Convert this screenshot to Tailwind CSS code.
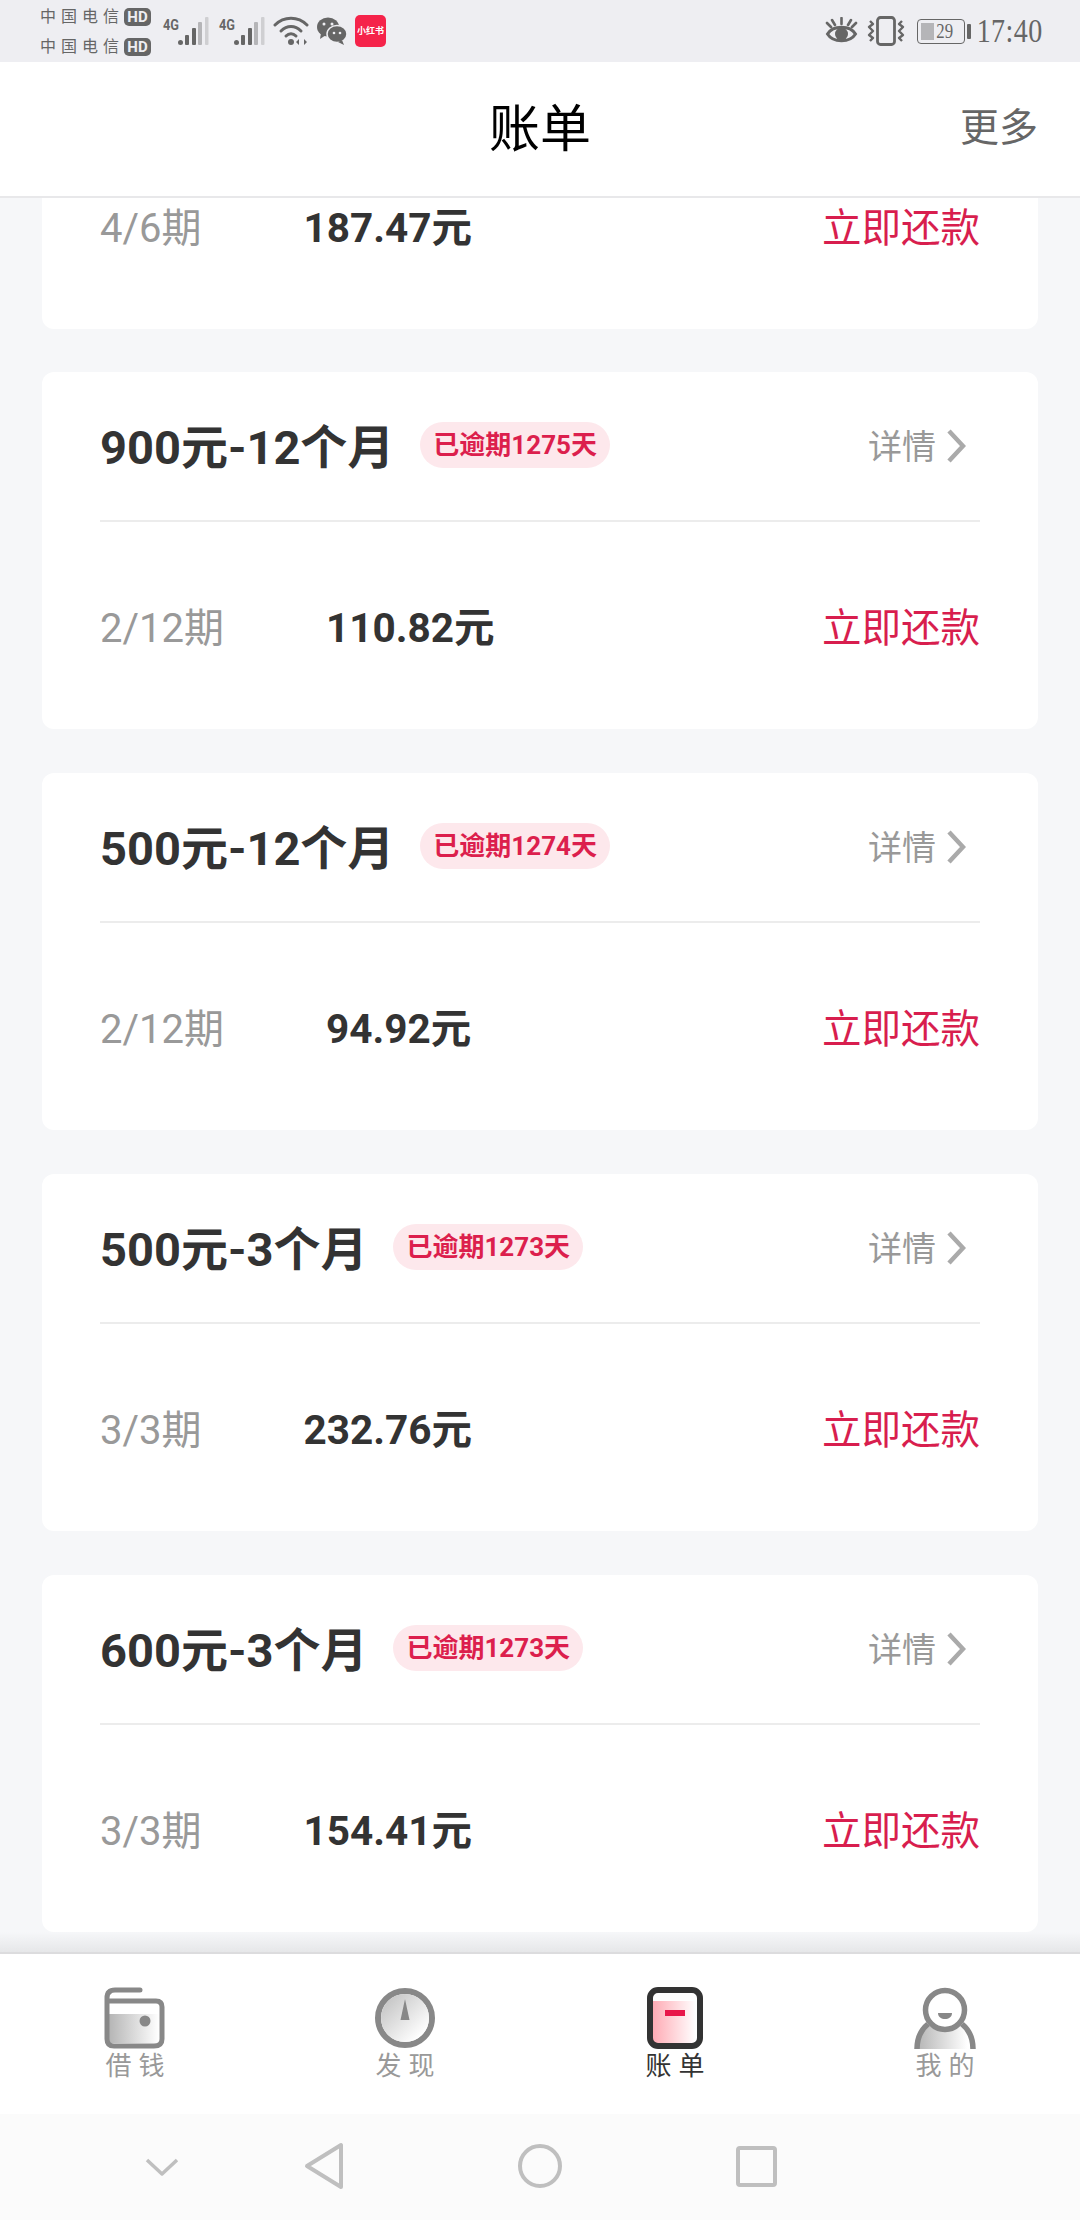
<!DOCTYPE html>
<html lang="zh-CN">
<head>
  <meta charset="UTF-8">
  <meta name="viewport" content="width=device-width, initial-scale=1.0">
  <title>账单</title>
  <script src="https://cdn.jsdelivr.net/npm/@tailwindcss/browser@4"></script>
</head>
<body class="font-['Roboto','Noto_Sans_CJK_SC',sans-serif]">
  <div class="w-[1080px] h-[2220px] flex flex-col overflow-hidden bg-[#f6f7f9]">

    <!-- Status bar -->
    <div class="h-[62px] shrink-0 bg-[#eeeef2] flex items-center justify-between pl-[40px] pr-[37px] text-[#666]">
      <div class="flex items-center">
        <div class="flex flex-col gap-[8px] pt-[1px] w-[113px] text-[16px] leading-[22px] tracking-[5px]">
          <div class="flex items-center">中国电信<span class="w-[27px] h-[18px] rounded-[5px] bg-[#666] text-[#eeeef2] text-[15px] leading-[18px] font-bold tracking-normal text-center">HD</span></div>
          <div class="flex items-center">中国电信<span class="w-[27px] h-[18px] rounded-[5px] bg-[#666] text-[#eeeef2] text-[15px] leading-[18px] font-bold tracking-normal text-center">HD</span></div>
        </div>
        <svg width="48" height="34" viewBox="0 0 48 34" class="ml-[9px] mt-[2px]">
          <text x="1" y="15" font-size="15" font-weight="700" fill="#666" textLength="16" lengthAdjust="spacingAndGlyphs">4G</text>
          <circle cx="18.5" cy="27.5" r="2.5" fill="#666"/>
          <rect x="23" y="20" width="4" height="10" rx="1" fill="#666"/>
          <rect x="30" y="13" width="4" height="17" rx="1" fill="#666"/>
          <rect x="36" y="7" width="4" height="23" rx="1" fill="#b5b5b8"/>
          <rect x="43" y="2" width="3.5" height="28" rx="1" fill="#cfcfd2"/>
        </svg>
        <svg width="48" height="34" viewBox="0 0 48 34" class="ml-[8px] mt-[2px]">
          <text x="1" y="15" font-size="15" font-weight="700" fill="#666" textLength="16" lengthAdjust="spacingAndGlyphs">4G</text>
          <circle cx="18.5" cy="27.5" r="2.5" fill="#666"/>
          <rect x="23" y="20" width="4" height="10" rx="1" fill="#666"/>
          <rect x="30" y="13" width="4" height="17" rx="1" fill="#666"/>
          <rect x="36" y="7" width="4" height="23" rx="1" fill="#b5b5b8"/>
          <rect x="43" y="2" width="3.5" height="28" rx="1" fill="#cfcfd2"/>
        </svg>
        <svg width="36" height="30" viewBox="0 0 36 30" class="ml-[7px]" fill="none" stroke="#666" stroke-width="3" stroke-linecap="round">
          <path d="M2 9C11 0 25 0 34 9"/>
          <path d="M8 15C14 9 22 9 28 15"/>
          <path d="M13 20C16 17 20 17 23 20"/>
          <circle cx="18" cy="26" r="3" fill="#666" stroke="none"/>
          <path d="M26 23L26 29L23 26Z M31 23L31 29L34 26Z" fill="#666" stroke="none"/>
        </svg>
        <svg width="30" height="28" viewBox="0 0 30 28" class="ml-[8px]">
          <ellipse cx="11" cy="10" rx="11" ry="9.5" fill="#666"/>
          <path d="M4 16L3 22L9 18Z" fill="#666"/>
          <ellipse cx="20" cy="17" rx="10" ry="8.5" fill="#666" stroke="#eeeef2" stroke-width="1.5"/>
          <path d="M25 23L27 28L21 25Z" fill="#666"/>
          <circle cx="7" cy="7" r="1.5" fill="#eeeef2"/>
          <circle cx="15" cy="7" r="1.5" fill="#eeeef2"/>
          <circle cx="17" cy="16" r="1.3" fill="#eeeef2"/>
          <circle cx="23" cy="16" r="1.3" fill="#eeeef2"/>
        </svg>
        <div class="ml-[8px] w-[31px] h-[32px] rounded-[5px] bg-[#f5234a] text-white text-[9px] font-bold leading-[32px] text-center whitespace-nowrap">小红书</div>
      </div>
      <div class="flex items-center">
        <svg width="33" height="28" viewBox="0 0 33 28" fill="none" stroke="#666" stroke-width="3">
          <path d="M2.5 17C8 8 25 8 30.5 17C25 26 8 26 2.5 17Z"/>
          <circle cx="16.5" cy="17" r="6.5" fill="#666" stroke="none"/>
          <path d="M16.5 1V7M7 3L10 8M26 3L23 8M2 6L6 10M31 6L27 10" stroke-linecap="round" stroke-width="2.6"/>
        </svg>
        <svg width="38" height="30" viewBox="0 0 38 30" class="ml-[9px]" fill="none" stroke="#666" stroke-width="2.8">
          <rect x="10.5" y="1.5" width="17" height="27" rx="3"/>
          <path d="M3 5L6 8L2 11L6 15L2 19L6 22L3 25M35 5L32 8L36 11L32 15L36 19L32 22L35 25" stroke-linejoin="round" stroke-width="2.4"/>
        </svg>
        <div class="ml-[12px] flex items-center">
          <div class="relative w-[48px] h-[25px] rounded-[4px] border border-[#666] flex items-center justify-center">
            <div class="absolute left-[3px] top-[3px] bottom-[3px] w-[13px] bg-[#b5b5b8]"></div>
            <span class="relative pl-[8px] text-[21px] leading-none font-['Liberation_Serif',serif] text-[#666] scale-x-80">29</span>
          </div>
          <div class="ml-[2px] w-[4px] h-[15px] rounded-[1px] bg-[#666]"></div>
        </div>
        <div class="ml-[10px] w-[62px] flex justify-end">
          <span class="shrink-0 text-[33px] leading-none tracking-[0.5px] font-['Liberation_Serif',serif] scale-x-85 origin-right">17:40</span>
        </div>
      </div>
    </div>

    <!-- Header -->
    <div class="relative h-[136px] shrink-0 bg-white border-b-2 border-[#e8e8ea] flex items-center justify-center">
      <span class="text-[51px] leading-none text-black">账单</span>
      <span class="absolute right-[42px] text-[39px] leading-none text-[#666] mb-[2px]">更多</span>
    </div>

    <!-- Bills list -->
    <div class="relative flex-1 min-h-0 overflow-hidden">
      <div class="flex flex-col gap-[44px] px-[42px] mt-[-76px]">

        <div class="bg-white rounded-[12px] px-[58px] h-[207px] mb-[-1px] pt-[6px] flex items-center justify-between">
          <div class="flex items-center gap-[102px]">
            <span class="text-[40px] text-[#999]">4/6期</span>
            <span class="text-[40.5px] font-bold text-[#333]">187.47元</span>
          </div>
          <span class="text-[39.5px] text-[#d81e4e]">立即还款</span>
        </div>

        <div class="bg-white rounded-[12px] px-[58px] h-[357px] flex flex-col">
          <div class="h-[150px] shrink-0 flex items-center border-b-2 border-[#ececec]">
            <span class="pt-[4px] text-[47px] font-bold text-[#333]">900元-12个月</span>
            <span class="ml-[26px] mb-[2px] h-[46px] px-[13px] rounded-full bg-[#fde8ec] text-[26px] leading-[46px] font-bold text-[#dc1f4d]">已逾期1275天</span>
            <span class="ml-auto pt-[2px] text-[34px] text-[#999]">详情</span>
            <svg width="20" height="34" viewBox="0 0 20 34" class="ml-[10px] mr-[14px]" fill="none" stroke="#aaa" stroke-width="4.5"><path d="M3 2L17 17L3 32"/></svg>
          </div>
          <div class="flex-1 pt-[6px] flex items-center justify-between">
            <div class="flex items-center gap-[102px]">
              <span class="text-[40px] text-[#999]">2/12期</span>
              <span class="text-[40.5px] font-bold text-[#333]">110.82元</span>
            </div>
            <span class="text-[39.5px] text-[#d81e4e]">立即还款</span>
          </div>
        </div>

        <div class="bg-white rounded-[12px] px-[58px] h-[357px] flex flex-col">
          <div class="h-[150px] shrink-0 flex items-center border-b-2 border-[#ececec]">
            <span class="pt-[4px] text-[47px] font-bold text-[#333]">500元-12个月</span>
            <span class="ml-[26px] mb-[2px] h-[46px] px-[13px] rounded-full bg-[#fde8ec] text-[26px] leading-[46px] font-bold text-[#dc1f4d]">已逾期1274天</span>
            <span class="ml-auto pt-[2px] text-[34px] text-[#999]">详情</span>
            <svg width="20" height="34" viewBox="0 0 20 34" class="ml-[10px] mr-[14px]" fill="none" stroke="#aaa" stroke-width="4.5"><path d="M3 2L17 17L3 32"/></svg>
          </div>
          <div class="flex-1 pt-[6px] flex items-center justify-between">
            <div class="flex items-center gap-[102px]">
              <span class="text-[40px] text-[#999]">2/12期</span>
              <span class="text-[40.5px] font-bold text-[#333]">94.92元</span>
            </div>
            <span class="text-[39.5px] text-[#d81e4e]">立即还款</span>
          </div>
        </div>

        <div class="bg-white rounded-[12px] px-[58px] h-[357px] flex flex-col">
          <div class="h-[150px] shrink-0 flex items-center border-b-2 border-[#ececec]">
            <span class="pt-[4px] text-[47px] font-bold text-[#333]">500元-3个月</span>
            <span class="ml-[26px] mb-[2px] h-[46px] px-[13px] rounded-full bg-[#fde8ec] text-[26px] leading-[46px] font-bold text-[#dc1f4d]">已逾期1273天</span>
            <span class="ml-auto pt-[2px] text-[34px] text-[#999]">详情</span>
            <svg width="20" height="34" viewBox="0 0 20 34" class="ml-[10px] mr-[14px]" fill="none" stroke="#aaa" stroke-width="4.5"><path d="M3 2L17 17L3 32"/></svg>
          </div>
          <div class="flex-1 pt-[6px] flex items-center justify-between">
            <div class="flex items-center gap-[102px]">
              <span class="text-[40px] text-[#999]">3/3期</span>
              <span class="text-[40.5px] font-bold text-[#333]">232.76元</span>
            </div>
            <span class="text-[39.5px] text-[#d81e4e]">立即还款</span>
          </div>
        </div>

        <div class="bg-white rounded-[12px] px-[58px] h-[357px] flex flex-col">
          <div class="h-[150px] shrink-0 flex items-center border-b-2 border-[#ececec]">
            <span class="pt-[4px] text-[47px] font-bold text-[#333]">600元-3个月</span>
            <span class="ml-[26px] mb-[2px] h-[46px] px-[13px] rounded-full bg-[#fde8ec] text-[26px] leading-[46px] font-bold text-[#dc1f4d]">已逾期1273天</span>
            <span class="ml-auto pt-[2px] text-[34px] text-[#999]">详情</span>
            <svg width="20" height="34" viewBox="0 0 20 34" class="ml-[10px] mr-[14px]" fill="none" stroke="#aaa" stroke-width="4.5"><path d="M3 2L17 17L3 32"/></svg>
          </div>
          <div class="flex-1 pt-[6px] flex items-center justify-between">
            <div class="flex items-center gap-[102px]">
              <span class="text-[40px] text-[#999]">3/3期</span>
              <span class="text-[40.5px] font-bold text-[#333]">154.41元</span>
            </div>
            <span class="text-[39.5px] text-[#d81e4e]">立即还款</span>
          </div>
        </div>

      </div>
      <!-- soft shadow cast by the tab bar -->
      <div class="absolute left-0 right-0 bottom-0 h-[20px] bg-gradient-to-b from-[#e6e7e9]/0 to-[#e6e7e9]"></div>
    </div>

    <!-- Tab bar -->
    <div class="h-[162px] shrink-0 bg-white border-t-2 border-[#dcdcde] grid grid-cols-4">
      <div class="flex flex-col items-center pt-[33px]">
        <svg width="62" height="62" viewBox="0 0 62 62">
          <defs><linearGradient id="g1" x1="0" x2="1" y1="0" y2="0"><stop offset="0" stop-color="#b5b5b5"/><stop offset="1" stop-color="#fff"/></linearGradient></defs>
          <rect x="5" y="27" width="50" height="29" fill="url(#g1)"/>
          <path d="M36 3H11Q3 3 3 11V52Q3 59 10 59H50Q58 59 58 52V20Q58 14 52 14H5" fill="none" stroke="#888" stroke-width="5" stroke-linecap="round"/>
          <circle cx="41" cy="34" r="5.5" fill="#888"/>
        </svg>
        <span class="mt-[2px] text-[26px] leading-[30px] tracking-[7px] pl-[7px] text-[#999]">借钱</span>
      </div>
      <div class="flex flex-col items-center pt-[33px]">
        <svg width="62" height="62" viewBox="0 0 62 62">
          <defs><linearGradient id="g2" x1="0" x2="1" y1="0" y2="1"><stop offset="0" stop-color="#bdbdbd"/><stop offset="0.85" stop-color="#fff"/></linearGradient></defs>
          <circle cx="31" cy="31" r="27" fill="#fff" stroke="#888" stroke-width="6"/>
          <circle cx="31" cy="31" r="24" fill="url(#g2)"/>
          <path d="M31 12L35.5 33H26.5Z" fill="#888"/>
        </svg>
        <span class="mt-[2px] text-[26px] leading-[30px] tracking-[7px] pl-[7px] text-[#999]">发现</span>
      </div>
      <div class="flex flex-col items-center pt-[33px]">
        <svg width="56" height="62" viewBox="0 0 56 62">
          <defs><linearGradient id="g3" x1="0" x2="1" y1="0" y2="0"><stop offset="0" stop-color="#ffa9b3"/><stop offset="0.95" stop-color="#fff"/></linearGradient></defs>
          <rect x="5" y="14" width="46" height="44" fill="url(#g3)"/>
          <rect x="3" y="3" width="50" height="56" rx="8" fill="none" stroke="#333" stroke-width="6"/>
          <rect x="18" y="23" width="20" height="6" fill="#e8174a"/>
        </svg>
        <span class="mt-[2px] text-[26px] leading-[30px] tracking-[7px] pl-[7px] text-[#333]">账单</span>
      </div>
      <div class="flex flex-col items-center pt-[33px]">
        <svg width="62" height="62" viewBox="0 0 62 62">
          <defs><linearGradient id="g4" x1="0" x2="1" y1="0" y2="0"><stop offset="0" stop-color="#b5b5b5"/><stop offset="0.9" stop-color="#fff"/></linearGradient></defs>
          <path d="M3 62C3 50 8 42 14 37C20 45 42 45 48 37C54 42 59 50 59 62Z" fill="url(#g4)"/>
          <path d="M3 62C3 50 8 42 14 37M48 37C54 42 59 50 59 62" fill="none" stroke="#888" stroke-width="5.5"/>
          <circle cx="31" cy="23" r="19.5" fill="#fff" stroke="#888" stroke-width="5.5"/>
          <path d="M24 26H38C38 34 24 34 24 26Z" fill="#888"/>
        </svg>
        <span class="mt-[2px] text-[26px] leading-[30px] tracking-[7px] pl-[7px] text-[#999]">我的</span>
      </div>
    </div>

    <!-- System navigation bar -->
    <div class="relative h-[106px] shrink-0 bg-[#fbfbfb]">
      <svg width="1080" height="106" viewBox="0 0 1080 106" fill="none" stroke="#bfbfbf" stroke-width="4" stroke-linejoin="round" class="absolute left-0 top-0">
        <path d="M147 46L162 60L177 46" stroke-width="3.5"/>
        <path d="M341 31V73L307 52Z"/>
        <circle cx="540" cy="52" r="20"/>
        <rect x="738" y="34" width="37" height="37" rx="2"/>
      </svg>
    </div>

  </div>
</body>
</html>
